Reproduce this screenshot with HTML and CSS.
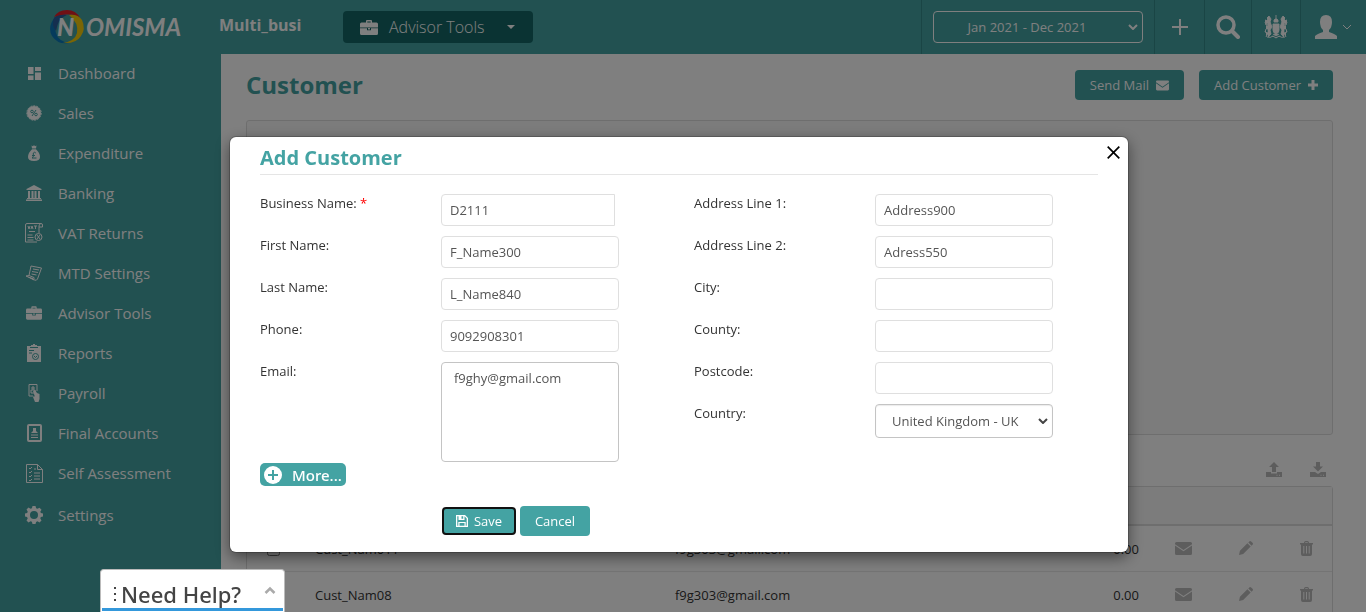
FILE: index.html
```html
<!DOCTYPE html>
<html lang="en">
<head>
<meta charset="utf-8">
<meta name="viewport" content="width=device-width, initial-scale=1">
<title>Customer</title>
<link rel="stylesheet" href="styles.css">
</head>
<body>
<svg class="sprite" aria-hidden="true">
  <symbol id="briefcase" viewBox="0 0 18 15"><path d="M6 2.500V1q0-1 1-1h4q1 0 1 1v1.500h4.500Q18 2.500 18 4v3.500H0V4q0-1.500 1.500-1.500zm1.300 0h3.400v-1H7.300zM0 8.300h7v2h4v-2h7v5.200q0 1.500-1.500 1.500h-15Q0 15 0 13.500z"/><path d="M8 8h2v1.500H8z"/></symbol>
  <symbol id="mail" viewBox="0 0 17 13"><path d="M1.500 0h14Q17 0 17 1.500v.7L8.500 8 0 2.200v-.7Q0 0 1.500 0M0 3.600l8.500 5.700L17 3.600v7.900q0 1.500-1.500 1.500h-14Q0 13 0 11.500z"/></symbol>
  <symbol id="plus" viewBox="0 0 10 10"><path d="M3.500 0h3v3.500H10v3H6.500V10h-3V6.500H0v-3h3.500z"/></symbol>
  <symbol id="pencil" viewBox="0 0 15 15"><path d="M1 10.500 9 2.500 12.500 6l-8 8L0 15zM10 1.500 11 .5q1-1 2 0L14.500 2q1 1 0 2l-1 1z"/></symbol>
  <symbol id="trash" viewBox="0 0 13 15"><path fill-rule="evenodd" d="M4 1.500Q4.200 0 5.500 0h2Q8.800 0 9 1.500V2h4v1.500h-1V13q0 2-1.800 2H2.800Q1 15 1 13V3.500H0V2h4zm1.200.5h2.600v-.8H5.200zM3.300 5v7.500h1V5zm2.700 0v7.500h1V5zm2.700 0v7.500h1V5z"/></symbol>
  <symbol id="upload" viewBox="0 0 16 15"><path d="M8 0l5 5h-3v5H6V5H3z"/><path fill-rule="evenodd" d="M0 10h5v1.500h6V10h5v5H0zm10.500 2.800v1h1v-1zm2.500 0v1h1v-1z"/></symbol>
  <symbol id="download" viewBox="0 0 16 15"><path d="M6 0h4v4.500h3l-5 5-5-5h3z"/><path fill-rule="evenodd" d="M0 10h5l3 2 3-2h5v5H0zm10.500 2.800v1h1v-1zm2.500 0v1h1v-1z"/></symbol>
  <symbol id="chevron" viewBox="0 0 10 6"><path d="M1 1l4 4 4-4" fill="none" stroke="currentColor"/></symbol>
</svg>

<header class="topbar">
  <a class="logo" href="#" aria-label="Nomisma">
    <svg width="140" height="36" viewBox="0 0 140 36">
      <path fill="#0b77b9" d="M6 8Q-2 18 3 27 9 36 20 34 9 32 7 24 4 15 10 8z"/>
      <path fill="#2a5f9e" d="M5 9Q11 3 18 6 9 9 7 22 2 16 5 9z"/>
      <path fill="#e1202b" d="M5 8Q9 1 18 1t13 8Q26 5 18 5.500 11 5 5 8z"/>
      <path fill="#f4cb0a" d="M20 6q9-1 13 5 4 9-1 16-5 8-18 7 12-2 14-10Q30 14 20 6z"/>
      <text x="8" y="27" class="logo-n">N</text>
      <text x="37" y="27" class="logo-word">OMISMA</text>
    </svg>
  </a>
  <strong class="company">Multi_busi</strong>
  <button class="advisor" type="button"><svg width="18" height="15"><use href="#briefcase"/></svg><span>Advisor Tools</span><i class="caret"></i></button>
  <div class="top-actions">
    <div class="cell period-cell">
      <select class="period" aria-label="Period"><option>Jan 2021 - Dec 2021</option></select>
      <svg class="select-arrow" width="10" height="6"><use href="#chevron"/></svg>
    </div>
    <button class="cell add-cell" type="button" aria-label="Add"><svg width="16" height="16" viewBox="0 0 16 16"><path d="M8 0v16M0 8h16" stroke="currentColor" stroke-width="2"/></svg></button>
    <button class="cell search-cell" type="button" aria-label="Search"><svg width="24" height="24" viewBox="0 0 24 24"><circle cx="10" cy="10" r="8" fill="none" stroke="currentColor" stroke-width="3.500"/><path d="M16 16l6 6" stroke="currentColor" stroke-width="4" stroke-linecap="round"/></svg></button>
    <button class="cell crest-cell" type="button" aria-label="HMRC">
      <svg width="24" height="24" viewBox="0 0 24 24" fill="none" stroke="currentColor" stroke-width=".9">
        <path d="M12 0v3M10 5q2-3 4 0v2h-4zM9 9h6v6q0 3-3 4-3-1-3-4zM12 9v10M9 13h6"/>
        <path d="M3 3l2-2 2 3-1 3 2 5-2 3 1 4-3 3M1 5l3 1-2 4-1-3M2 11l3-2 1 3-4 2-1 3 3 1-2 4M5 4l1 4M4 14l2 4M21 3l-2-2-2 3 1 3-2 5 2 3-1 4 3 3M23 5l-3 1 2 4 1-3M22 11l-3-2-1 3 4 2 1 3-3 1 2 4M19 4l-1 4M20 14l-2 4"/>
        <path d="M3 22q4 1 6-1l3 2 3-2q2 2 6 1M9 19l3 2 3-2"/>
      </svg>
    </button>
    <button class="cell user-cell" type="button" aria-label="Account"><svg width="22" height="24" viewBox="0 0 22 24"><path fill="currentColor" d="M11 0q6 0 6 7 0 5-3 8v2q6 2 8 4v3H0v-3q2-2 8-4v-2Q5 12 5 7q0-7 6-7"/></svg><svg width="10" height="6"><use href="#chevron"/></svg></button>
  </div>
</header>

<div class="layout">
  <nav class="sidebar" aria-label="Main">
    <a href="#"><svg width="13" height="13" viewBox="0 0 13 13"><path d="M0 0h5.500v7H0zM7 0h6v4H7zM7 5.500h6V13H7zM0 8.500h5.500V13H0z"/></svg><span>Dashboard</span></a>
    <a href="#"><svg width="16" height="16" viewBox="0 0 16 16"><circle cx="8" cy="8" r="7"/><circle cx="8" cy="8" r="7.200" fill="none" stroke="currentColor" stroke-dasharray="2 1"/><g class="cut"><circle cx="6" cy="6.500" r="1.300"/><circle cx="10" cy="9.500" r="1.300"/><path d="M10 5l-4 6"/></g></svg><span>Sales</span></a>
    <a href="#"><svg width="12" height="16" viewBox="0 0 12 16"><path d="M3.500.5l1.500.7L6 0l1 1.200L8.500.5 8 3.500H4zM4 4.200h4Q12 8 12 12q0 4-6 4t-6-4q0-4 4-7.800"/><path class="cut" d="M7.800 8Q6.500 6.500 5.300 8v3q0 1.500-1.300 2h4.500M4 10.500h3"/></svg><span>Expenditure</span></a>
    <a href="#"><svg width="16" height="16" viewBox="0 0 16 16"><path d="M8 0l7.500 4v1H.5V4zM2 6h2v7H2zm3.500 0h2v7h-2zm3 0h2v7h-2zM12 6h2v7h-2zM1 13h14v1H1zm-1 1.500h16V16H0z"/></svg><span>Banking</span></a>
    <a href="#"><svg class="line" width="18" height="20" viewBox="0 0 18 20"><path d="M14 10V3q0-2 2-2.500H2Q.5.500.500 2v17H12M14 4h3.500V2q0-1.500-1.500-1.500M2.500 12h5M2.500 14.500h6M2.500 17h6M3 3l1 3 1-3M6 6l1-3 1 3M9 3h3M10.500 3v3M4 8.500h6"/><circle cx="13.500" cy="14" r="3.500"/><path d="M12 12l3 4m0-4l-3 4"/></svg><span>VAT Returns</span></a>
    <a href="#"><svg class="line" width="16" height="16" viewBox="0 0 16 16"><path d="M5 1l10.500 2-4 11q-1 2-3 1L0 11l3-.5zM3 10.500l5 2v2M7 4l6 1M6 6.500l6 1M5.500 9l5 1"/><path class="solid" d="M0 11l7 2 1 2.500z"/></svg><span>MTD Settings</span></a>
    <a href="#"><svg width="16" height="14"><use href="#briefcase"/></svg><span>Advisor Tools</span></a>
    <a href="#"><svg width="14" height="18" viewBox="0 0 14 18"><path d="M0 2h4V1h2V0h2v1h2v1h4v16H0z"/><path class="cut" d="M3 3.500h8M2 6.500h5M2 9h3"/><circle class="cut" cx="8.500" cy="12.500" r="3"/><path class="cut" d="M7 12l1.500 1.500L10 12"/></svg><span>Reports</span></a>
    <a href="#"><svg class="line" width="12" height="18" viewBox="0 0 12 18"><path d="M5 12H1V.5h8V7M4 3h2v2H4zM3 6h4v3H3z"/><path class="solid" d="M5 7l2-1 2 3 2.500 1v5l-1 3H7l-2-5 1-1 1 1z"/></svg><span>Payroll</span></a>
    <a href="#"><svg class="line" width="15" height="18" viewBox="0 0 15 18"><rect x="1" y="1" width="13" height="16" rx="1" stroke-width="2"/><path class="solid" d="M6 4h3v3l2 2H4l2-2z"/><path d="M4 11h7M4 13.500h7"/></svg><span>Final Accounts</span></a>
    <a href="#"><svg class="line" width="17" height="19" viewBox="0 0 17 19"><path d="M.5.500h11l5 5v13H.5zM11.500.500v5h5M3 4l1 1 2-2M3 8l1 1 2-2M3 12l1 1 2-2M3 16l1 1 2-2M8 5h2M8 9h6M8 12h6M8 15h6"/></svg><span>Self Assessment</span></a>
    <a class="settings" href="#"><svg width="18" height="18" viewBox="0 0 18 18"><path fill-rule="evenodd" d="M7.500 0h3l.6 2.200 1.400.6 2-1.100 2 2-1.200 2 .6 1.400 2.100.5v3l-2.200.5-.5 1.400 1.200 2-2 2-2-1.200-1.400.6-.6 2.100h-3l-.6-2.200-1.400-.5-2 1.200-2-2 1.200-2-.6-1.400L0 10.500v-3l2.200-.5.500-1.400-1.200-2 2-2 2 1.200 1.400-.6zM9 5a4 4 0 1 0 0 8 4 4 0 0 0 0-8"/></svg><span>Settings</span></a>
  </nav>

  <main class="content">
    <div class="page-head">
      <h1>Customer</h1>
      <button class="btn" type="button">Send Mail<svg width="13" height="11"><use href="#mail"/></svg></button>
      <button class="btn" type="button">Add Customer<svg width="10" height="10"><use href="#plus"/></svg></button>
    </div>
    <section class="panel"></section>
    <div class="transfer">
      <button type="button" aria-label="Upload"><svg width="16" height="15"><use href="#upload"/></svg></button>
      <button type="button" aria-label="Download"><svg width="16" height="15"><use href="#download"/></svg></button>
    </div>
    <div class="table-wrap">
      <table>
        <colgroup><col class="c-check"><col class="c-name"><col><col class="c-mail"><col class="c-edit"><col class="c-del"></colgroup>
        <thead><tr><td colspan="6"></td></tr></thead>
        <tbody>
          <tr><td class="check"><input type="checkbox" aria-label="Select Cust_Nam011"></td><td>Cust_Nam011</td><td><div class="pair"><span>f9g303@gmail.com</span><span>0.00</span></div></td><td class="ico"><button type="button" aria-label="Mail"><svg width="17" height="13"><use href="#mail"/></svg></button></td><td class="ico"><button type="button" aria-label="Edit"><svg width="14" height="14"><use href="#pencil"/></svg></button></td><td class="ico"><button type="button" aria-label="Delete"><svg width="13" height="15"><use href="#trash"/></svg></button></td></tr>
          <tr><td class="check"></td><td>Cust_Nam08</td><td><div class="pair"><span>f9g303@gmail.com</span><span>0.00</span></div></td><td class="ico"><button type="button" aria-label="Mail"><svg width="17" height="13"><use href="#mail"/></svg></button></td><td class="ico"><button type="button" aria-label="Edit"><svg width="14" height="14"><use href="#pencil"/></svg></button></td><td class="ico"><button type="button" aria-label="Delete"><svg width="13" height="15"><use href="#trash"/></svg></button></td></tr>
        </tbody>
      </table>
    </div>
  </main>
</div>

<div class="backdrop">
  <form class="modal" role="dialog" aria-labelledby="modal-title">
    <button class="close" type="button" aria-label="Close"><svg width="13" height="13" viewBox="0 0 13 13"><path d="M.7.700l11.600 11.600M12.300.700L.7 12.300" stroke="currentColor" stroke-width="1.700"/></svg></button>
    <h2 id="modal-title">Add Customer</h2>
    <div class="columns">
      <div class="fields">
        <label for="business">Business Name: <span class="required">*</span></label><input class="joined" id="business" type="text" value="D2111">
        <label for="first">First Name:</label><input id="first" type="text" value="F_Name300">
        <label for="last">Last Name:</label><input id="last" type="text" value="L_Name840">
        <label for="phone">Phone:</label><input id="phone" type="text" value="9092908301">
        <label for="email">Email:</label><textarea id="email">f9ghy@gmail.com</textarea>
      </div>
      <div class="fields">
        <label for="addr1">Address Line 1:</label><input id="addr1" type="text" value="Address900">
        <label for="addr2">Address Line 2:</label><input id="addr2" type="text" value="Adress550">
        <label for="city">City:</label><input id="city" type="text">
        <label for="county">County:</label><input id="county" type="text">
        <label for="postcode">Postcode:</label><input id="postcode" type="text">
        <label for="country">Country:</label>
        <div class="select-box"><select id="country"><option>United Kingdom - UK</option></select><svg class="select-arrow" width="10" height="6"><use href="#chevron"/></svg></div>
      </div>
    </div>
    <button class="more" type="button"><svg width="18" height="18" viewBox="0 0 18 18"><circle cx="9" cy="9" r="9" fill="#fff"/><path d="M9 4v10M4 9h10" stroke="#44a3a3" stroke-width="2"/></svg>More...</button>
    <div class="modal-actions">
      <button class="btn save" type="submit"><svg width="12" height="12" viewBox="0 0 12 12"><path fill-rule="evenodd" d="M0 0h9l3 3v9H0zm1.300 1.300v9.400h1V7h7.400v3.700h1V3.600L8.500 1.300V5H2.500V1.300zm4.200 0v2.400h1.700V1.300zM3.500 8v2.700h5V8z"/></svg>Save</button>
      <button class="btn cancel" type="button">Cancel</button>
    </div>
  </form>
</div>

<button class="help" type="button"><svg width="4" height="16" viewBox="0 0 4 16"><path d="M1 1h2v2H1zm0 6h2v2H1zm0 6h2v2H1z"/></svg><span>Need Help?</span><svg class="up" width="12" height="12" viewBox="0 0 12 12"><path d="M1.500 7L6 2.500 10.500 7" fill="none" stroke="#aaa" stroke-width="2.500"/></svg></button>
</body>
</html>
```
FILE: styles.css
```css
:root {
  --teal: #44a3a3;
  --line: #dfdfdf;
}
* { box-sizing: border-box; }
body {
  margin: 0;
  height: 100vh;
  overflow: hidden;
  display: flex;
  flex-direction: column;
  font: 13px/18px "Open Sans", sans-serif;
  color: #333;
  background: #fff;
}
button, input, select, textarea { font: inherit; color: inherit; }
button { cursor: pointer; border: 0; padding: 0; background: none; }
svg { fill: currentColor; flex: none; display: block; }
a { color: inherit; text-decoration: none; }
.sprite { position: absolute; width: 0; height: 0; }

.topbar {
  flex: none;
  display: flex;
  align-items: center;
  height: 54px;
  padding-left: 49px;
  color: #fff;
  background: var(--teal);
}
.logo { width: 170px; }
.logo-n { font: italic 900 24px Lato, sans-serif; }
.logo-word { font: italic 700 24px Lato, sans-serif; }
.company { width: 124px; font-size: 16px; font-weight: 700; padding-bottom: 4px; }
.advisor {
  display: flex;
  align-items: center;
  width: 190px;
  height: 32px;
  padding: 0 18px 0 17px;
  border-radius: 4px;
  background: #146766;
  font-size: 16px;
  font-weight: 300;
}
.advisor span { margin: 0 auto 0 11px; }
.caret { border: 4px solid transparent; border-top-color: #fff; border-bottom: 0; }
.top-actions { display: flex; align-self: stretch; margin-left: auto; }
.cell {
  display: flex;
  align-items: center;
  justify-content: center;
  border-left: 1px solid #358a8a;
}
.period-cell { width: 233px; position: relative; }
.period {
  appearance: none;
  width: 210px;
  height: 32px;
  padding: 0 22px 0 0;
  text-align: center;
  text-align-last: center;
  border: 1px solid #fff;
  border-radius: 4px;
  background: none;
}
.select-arrow { position: absolute; right: 5px; top: 50%; margin-top: -3px; pointer-events: none; stroke-width: 2; }
.period-cell .select-arrow { right: 16px; }
.add-cell { width: 50px; }
.search-cell { width: 47px; }
.crest-cell { width: 49px; }
.user-cell { width: 66px; gap: 5px; }

.layout { flex: 1; min-height: 0; display: flex; }
.sidebar { flex: none; width: 221px; color: #fff; background: var(--teal); }
.sidebar a {
  display: grid;
  grid-template-columns: 20px 1fr;
  gap: 14px;
  align-items: center;
  justify-items: center;
  height: 40px;
  padding: 0 0 2px 24px;
  font-size: 15px;
  line-height: 20px;
}
.sidebar a span { justify-self: start; }
.sidebar .settings { height: 44px; }
.cut { fill: none; stroke: var(--teal); }
.line { fill: none; stroke: currentColor; }
.solid { fill: currentColor; stroke: none; }

.content { flex: 1; min-width: 0; padding: 0 33px 0 25px; }
.page-head { display: flex; align-items: center; gap: 15px; height: 66px; padding-bottom: 4px; }
h1 { margin: 0 auto 0 0; font-size: 24px; line-height: 32px; color: var(--teal); }
.btn {
  display: flex;
  align-items: center;
  justify-content: center;
  gap: 7px;
  height: 30px;
  padding: 0 15px;
  border-radius: 4px;
  color: #fff;
  background: var(--teal);
}
.panel { height: 315px; border: 1px solid #ddd; border-radius: 3px; background: #f9f9f9; }
.transfer { display: flex; justify-content: flex-end; gap: 28px; padding: 27px 7px 9px; color: #bbb; }
.table-wrap { border: 1px solid #ddd; border-radius: 3px; }
table { width: 100%; border-collapse: collapse; table-layout: fixed; }
td { height: 46px; padding: 2px 8px 0; border-top: 1px solid #e9e9e9; }
thead td { height: 38px; background: #f9f9f9; border-top: 0; border-bottom: 2px solid #ddd; }
.c-check { width: 60px; }
.c-name { width: 360px; }
.c-mail { width: 64px; }
.c-edit { width: 60px; }
.c-del { width: 56px; }
.check { text-align: center; }
.check input { display: block; margin: 0 auto 0 12px; }
.pair { display: flex; justify-content: space-between; padding-right: 5px; }
.ico { color: #bbb; padding: 0; }
.ico:last-child { padding-left: 6px; }
.ico button { display: block; margin: auto; }

.backdrop { position: fixed; inset: 0; background: rgba(0, 0, 0, .5); padding-top: 137px; }
.modal {
  position: relative;
  width: 898px;
  max-width: 95%;
  margin: 0 auto;
  left: -4px;
  padding: 8px 30px 16px;
  border-radius: 6px;
  background: #fff;
  box-shadow: 0 0 0 1px rgba(0, 0, 0, .2), 0 5px 15px rgba(0, 0, 0, .5);
}
.close { position: absolute; top: 9px; right: 8px; color: #000; }
h2 {
  margin: 0 0 19px;
  padding-bottom: 3px;
  border-bottom: 1px solid #e5e5e5;
  font-size: 20px;
  line-height: 26px;
  color: var(--teal);
}
.columns { display: grid; grid-template-columns: 359px 359px; gap: 75px; }
.fields { display: grid; grid-template-columns: 181px 178px; gap: 10px 0; align-items: start; align-content: start; }
.required { color: #f00; }
.fields input, .fields textarea, .fields select {
  width: 100%;
  height: 32px;
  padding: 0 8px;
  border: 1px solid var(--line);
  border-radius: 4px;
  background: #fff;
  color: #555;
}
.fields .joined { width: 174px; border-radius: 4px 0 0 4px; }
.fields textarea { height: 100px; padding: 6px 12px; border-color: #c4c4c4; resize: none; display: block; }
.select-box { position: relative; color: #444; }
.fields select { appearance: none; height: 34px; padding: 0 16px; border-color: #c4c4c4; box-shadow: inset 0 1px 1px rgba(0, 0, 0, .08); display: block; }
.more {
  display: flex;
  align-items: center;
  gap: 10px;
  height: 23px;
  margin: 1px 0 20px;
  padding: 0 4px;
  border-radius: 5px;
  color: #fff;
  background: var(--teal);
  font: 500 15px/20px "Noto Sans", sans-serif;
}
.modal-actions { display: flex; align-items: center; gap: 4px; padding-left: 182px; }
.modal-actions .btn { font-weight: 500; }
.modal-actions .save { width: 74px; height: 28px; gap: 6px; padding: 0; border: 2px solid #111; }
.modal-actions .cancel { width: 70px; }

.help {
  position: fixed;
  left: 100px;
  bottom: 0;
  display: flex;
  align-items: center;
  width: 185px;
  height: 43px;
  padding: 6px 8px 0 12px;
  border: 1px solid #bbb;
  border-bottom: 0;
  border-radius: 4px 4px 0 0;
  background: linear-gradient(#3498db, #3498db) 1px 38px / 181px 3px no-repeat #fff;
  color: #444;
  font: 500 22px/30px "Noto Sans", sans-serif;
}
.help span { margin: 0 auto 0 4px; }
.help .up { margin-bottom: 4px; }
```
